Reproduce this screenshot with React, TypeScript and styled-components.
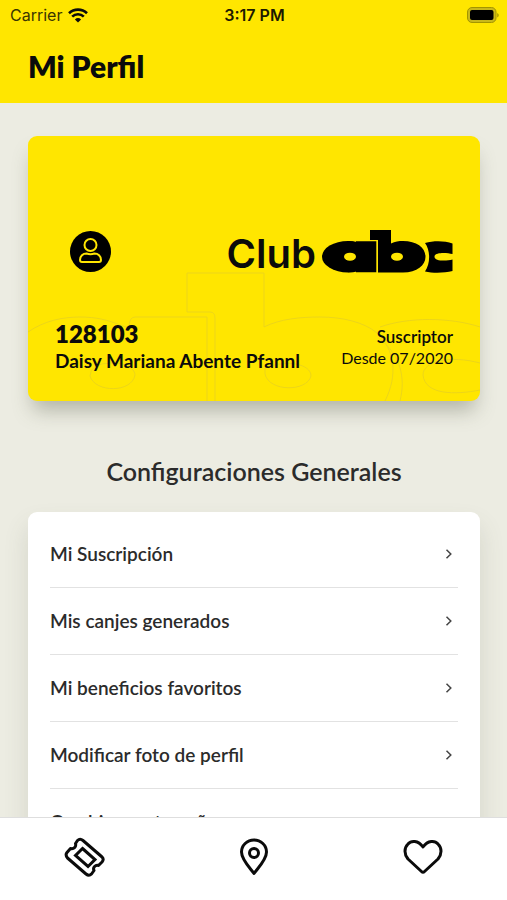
import React from "react";
import styled, { createGlobalStyle } from "styled-components";

const GlobalStyle = createGlobalStyle`
  * { box-sizing: border-box; }
  body { margin: 0; background: #ecece2; font-family: Lato, sans-serif; color: #2b2b2b; }
  h1, h2, p, ul { margin: 0; padding: 0; }
`;

const Screen = styled.div`
  height: 100vh;
  display: flex;
  flex-direction: column;
  overflow: hidden;
`;

const Header = styled.header`
  flex: none;
  background: #ffe600;
  color: #0b0b0b;
  padding-bottom: 16px;
  z-index: 1;
`;

const StatusBar = styled.div`
  height: 30px;
  padding: 0 8px 0 10px;
  display: grid;
  grid-template-columns: 1fr auto 1fr;
  align-items: center;
  font: 400 16px/20px Inter, sans-serif;
`;

const Carrier = styled.div`
  display: flex;
  align-items: center;
  gap: 6px;
  color: #3a3500;
`;

const Clock = styled.time`
  font-weight: 600;
  color: #1d1a00;
`;

const Battery = styled.svg`
  justify-self: end;
`;

const Title = styled.h1`
  padding: 16px 28px 0;
  font-size: 30px;
  line-height: 41px;
  font-weight: 800;
`;

const Content = styled.main`
  flex: 1;
  min-height: 0;
  overflow: hidden;
  padding: 33px 27px 0 28px;
`;

const MemberCard = styled.section`
  position: relative;
  height: 265px;
  border-radius: 9px;
  background: #ffe600;
  color: #0b0b0b;
  box-shadow: 0 14px 20px -5px rgba(90, 95, 75, 0.4);
  padding: 94px 27px 27px;
  display: flex;
  flex-direction: column;
  justify-content: space-between;
`;

const Watermark = styled.svg`
  position: absolute;
  inset: 0;
  width: 100%;
  height: 100%;
  border-radius: 9px;
`;

const CardRow = styled.div`
  position: relative;
  display: flex;
  justify-content: space-between;
  align-items: center;
`;

const Avatar = styled.svg`
  margin-left: 15px;
`;

const Brand = styled.div`
  display: flex;
  align-items: flex-end;
  gap: 6px;
  font: 600 40px/38px Inter, sans-serif;
`;

const Member = styled.div`
  line-height: 27px;
`;

const MemberNumber = styled.p`
  font-size: 24px;
  font-weight: 800;
`;

const MemberName = styled.p`
  font-size: 19px;
  font-weight: 700;
`;

const Plan = styled.div`
  text-align: right;
  font-size: 16px;
  line-height: 21px;
`;

const PlanName = styled.p`
  font-size: 17px;
  font-weight: 600;
`;

const SectionTitle = styled.h2`
  margin: 53px 0 24px;
  text-align: center;
  font-size: 25px;
  line-height: 34px;
  font-weight: 600;
`;

const Menu = styled.ul`
  list-style: none;
  background: #fff;
  border-radius: 9px;
  padding: 9px 22px;
  box-shadow: 0 14px 24px rgba(90, 95, 75, 0.16);
`;

const MenuItem = styled.li`
  border-bottom: 1px solid #e2e2e2;
`;

const MenuLink = styled.a`
  height: 66px;
  display: flex;
  align-items: center;
  justify-content: space-between;
  padding-right: 5px;
  color: #2b2b2b;
  text-decoration: none;
  font-size: 19px;
  line-height: 24px;
  font-weight: 600;
`;

const TabBar = styled.nav`
  flex: none;
  height: 83px;
  background: #fff;
  border-top: 1px solid #dedede;
  display: grid;
  grid-template-columns: repeat(3, 1fr);
  z-index: 1;
`;

const Tab = styled.button`
  border: 0;
  background: none;
  padding: 0 0 4px;
  display: flex;
  align-items: center;
  justify-content: center;
  color: #0b0b0b;
`;

const items = [
  "Mi Suscripción",
  "Mis canjes generados",
  "Mi beneficios favoritos",
  "Modificar foto de perfil",
  "Cambiar contraseña",
];

const WifiIcon = () => (
  <svg width="20" height="15" viewBox="0 0 20 15" fill="none" stroke="#0b0b0b" strokeWidth="2.6">
    <path d="M1 5.2a13 13 0 0 1 18 0" />
    <path d="M4.2 8.6a8.3 8.3 0 0 1 11.6 0" />
    <path d="M10 14.6 6.9 11.4a4.6 4.6 0 0 1 6.2 0z" fill="#0b0b0b" stroke="none" />
  </svg>
);

const BatteryIcon = () => (
  <Battery width="32" height="17" viewBox="0 0 32 17" role="img" aria-label="Batería">
    <rect x="0.5" y="0.5" width="28.5" height="15" rx="4.5" fill="#c9b81a" stroke="#a39500" />
    <rect x="3" y="3" width="23.5" height="10" rx="2" fill="#000" />
    <path d="M30.4 6v4.500c1.600-.8 1.600-3.700 0-4.500z" fill="#8f8200" />
  </Battery>
);

const ChevronIcon = () => (
  <svg width="8" height="12" viewBox="0 0 8 12" fill="none" stroke="#444" strokeWidth="1.5">
    <path d="M1.5 1.8 5.800 6 1.500 10.200" />
  </svg>
);

const BrandMark = () => (
  <svg width="131" height="43" viewBox="0 0 131 43" role="img" aria-label="abc">
    <ellipse cx="26" cy="26.7" rx="26" ry="15.7" />
    <path d="M26 11q5 0 8 1.500V11.300h20.300v31H34v-1.500q-3 1.500-8 1.500z" />
    <ellipse cx="28" cy="26.7" rx="6" ry="4" fill="#ffe600" />
    <path d="M48 0h21v13.500c4-2 8-2.500 12-2.500 14 0 22.500 7 22.500 15.700S95 42.400 81 42.400H56V10H48z" />
    <ellipse cx="75" cy="26.7" rx="6" ry="4" fill="#ffe600" />
    <path d="M130.500 13.500V24c-6-1.500-18-2-18 2.700s12 4.500 18 2.800v11.500c-8 2-19 2.400-27.500 .5 5.500-8 5.500-21 0-28.500 8.500-2.500 19.500-2.500 27.500 .5z" />
  </svg>
);

const WatermarkArt = () => (
  <Watermark viewBox="0 0 452 265" preserveAspectRatio="xMaxYMax slice" fill="none" stroke="#ecd51a" aria-hidden="true">
    <path d="M0 196c16-11 34-15 52-15 16 0 28 3 40 8l9 3q0-11 6-11h72v84" />
    <path d="M62 240q0-13 22-13c16 0 23 7 23 12-3 18-40 18-45 1z" />
    <path d="M187 265v-83q0-6-5-6h-23v-39h77v54c16-8 36-10 56-10 22 0 44 5 57 16 18 17 21 42 8 68" />
    <path d="M237 238c4 18 42 18 46 2 0-12-24-17-46-8z" />
    <path d="M452 191c-30-10-72-10-100 0M352 203c20 16 26 38 20 62" />
    <path d="M452 227c-30-8-57-2-57 12 2 20 32 20 57 15" />
  </Watermark>
);

const TicketIcon = () => (
  <svg width="42" height="42" viewBox="0 0 42 42" fill="none" stroke="currentColor" strokeWidth="3" strokeLinejoin="round">
    <path d="M13.500 4.500q2.500-2.500 5.500 0L37.500 20.500q3 2.500 .5 5.500l-3.500 3.500c-3-1-6 2-4.500 5l-2.500 3.500q-2.500 2.500-5.500 0L3.500 22q-2.500-3-.5-5.500l3.500-4c3 1 6-1.500 5-5z" />
    <path d="M18.500 12.500 31 23.500 24 30.500 11.500 19.500z" strokeLinejoin="miter" />
  </svg>
);

const PinIcon = () => (
  <svg width="30" height="38" viewBox="0 0 30 38" fill="none" stroke="currentColor" strokeWidth="3" strokeLinejoin="round">
    <path d="M15 35.500C12 31 2.500 22 2.500 14a12.500 12 0 0 1 25 0C27.500 22 18 31 15 35.500z" />
    <circle cx="15" cy="15" r="4.500" />
  </svg>
);

const HeartIcon = () => (
  <svg width="40" height="36" viewBox="0 0 40 36" fill="none" stroke="currentColor" strokeWidth="3" strokeLinejoin="round">
    <path d="M20 8C15 1 8 1.500 5 5c-4 4-4 10 0 15l13.500 12.500q1.500 1.500 3 0L35 20c4-5 4-11 0-15-3-3.500-10-4-15 3z" />
  </svg>
);

export default function App() {
  return (
    <>
      <GlobalStyle />
      <Screen>
        <Header>
          <StatusBar>
            <Carrier>Carrier <WifiIcon /></Carrier>
            <Clock>3:17 PM</Clock>
            <BatteryIcon />
          </StatusBar>
          <Title>Mi Perfil</Title>
        </Header>
        <Content>
          <MemberCard>
            <WatermarkArt />
            <CardRow>
              <Avatar width="41" height="41" viewBox="0 0 41 41" fill="none" stroke="#ffe600" strokeWidth="2" aria-hidden="true">
                <circle cx="20.5" cy="20.5" r="20.5" fill="#000" stroke="none" />
                <circle cx="20.5" cy="14" r="6" />
                <path d="M12 31q-2 0-2-2c0-4 3-6.500 6.500-6.500q4 1.500 8 0c3.500 0 6.500 2.500 6.500 6.500q0 2-2 2z" />
              </Avatar>
              <Brand>Club <BrandMark /></Brand>
            </CardRow>
            <CardRow>
              <Member>
                <MemberNumber>128103</MemberNumber>
                <MemberName>Daisy Mariana Abente Pfannl</MemberName>
              </Member>
              <Plan>
                <PlanName>Suscriptor</PlanName>
                <p>Desde 07/2020</p>
              </Plan>
            </CardRow>
          </MemberCard>
          <SectionTitle>Configuraciones Generales</SectionTitle>
          <Menu>
            {items.map((label) => (
              <MenuItem key={label}>
                <MenuLink href="#">{label}<ChevronIcon /></MenuLink>
              </MenuItem>
            ))}
          </Menu>
        </Content>
        <TabBar aria-label="Principal">
          <Tab type="button" aria-label="Beneficios"><TicketIcon /></Tab>
          <Tab type="button" aria-label="Mapa"><PinIcon /></Tab>
          <Tab type="button" aria-label="Favoritos"><HeartIcon /></Tab>
        </TabBar>
      </Screen>
    </>
  );
}
